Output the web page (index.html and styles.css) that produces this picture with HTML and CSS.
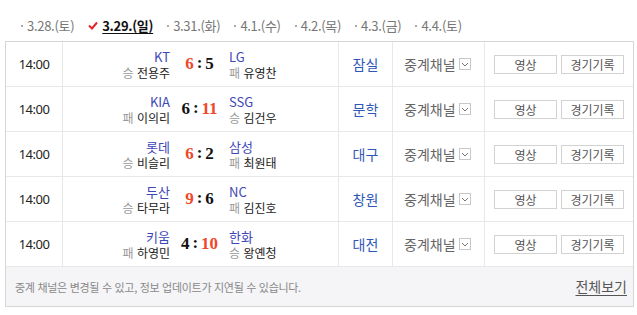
FILE: index.html
```html
<!DOCTYPE html>
<html lang="ko">
<head>
<meta charset="utf-8">
<link rel="stylesheet" href="styles.css">
</head>
<body>
<ul class="dates">
  <li class="date">3.28.(토)</li>
  <li class="date on"><svg class="check" width="10" height="9" viewBox="0 0 10 9"><path d="M1 4.5 L4 7.5 L9 1.5" fill="none" stroke="#e0252b" stroke-width="2"/></svg>3.29.(일)</li>
  <li class="date">3.31.(화)</li>
  <li class="date">4.1.(수)</li>
  <li class="date">4.2.(목)</li>
  <li class="date">4.3.(금)</li>
  <li class="date">4.4.(토)</li>
</ul>
<div class="board">
  <div class="row">
    <div class="cell time">14:00</div>
    <div class="cell match">
      <div class="team left"><span class="name">KT</span><span class="pitcher"><em>승</em> 전용주</span></div>
      <div class="score"><b class="win">6</b><i>:</i><b>5</b></div>
      <div class="team right"><span class="name">LG</span><span class="pitcher"><em>패</em> 유영찬</span></div>
    </div>
    <div class="cell stadium">잠실</div>
    <div class="cell channel">중계채널<span class="sel"><svg width="8" height="5" viewBox="0 0 8 5"><path d="M1 1 L4 4 L7 1" fill="none" stroke="#777" stroke-width="1"/></svg></span></div>
    <div class="cell btns"><span class="btn">영상</span><span class="btn">경기기록</span></div>
  </div>
  <div class="row">
    <div class="cell time">14:00</div>
    <div class="cell match">
      <div class="team left"><span class="name">KIA</span><span class="pitcher"><em>패</em> 이의리</span></div>
      <div class="score"><b>6</b><i>:</i><b class="win">11</b></div>
      <div class="team right"><span class="name">SSG</span><span class="pitcher"><em>승</em> 김건우</span></div>
    </div>
    <div class="cell stadium">문학</div>
    <div class="cell channel">중계채널<span class="sel"><svg width="8" height="5" viewBox="0 0 8 5"><path d="M1 1 L4 4 L7 1" fill="none" stroke="#777" stroke-width="1"/></svg></span></div>
    <div class="cell btns"><span class="btn">영상</span><span class="btn">경기기록</span></div>
  </div>
  <div class="row">
    <div class="cell time">14:00</div>
    <div class="cell match">
      <div class="team left"><span class="name">롯데</span><span class="pitcher"><em>승</em> 비슬리</span></div>
      <div class="score"><b class="win">6</b><i>:</i><b>2</b></div>
      <div class="team right"><span class="name">삼성</span><span class="pitcher"><em>패</em> 최원태</span></div>
    </div>
    <div class="cell stadium">대구</div>
    <div class="cell channel">중계채널<span class="sel"><svg width="8" height="5" viewBox="0 0 8 5"><path d="M1 1 L4 4 L7 1" fill="none" stroke="#777" stroke-width="1"/></svg></span></div>
    <div class="cell btns"><span class="btn">영상</span><span class="btn">경기기록</span></div>
  </div>
  <div class="row">
    <div class="cell time">14:00</div>
    <div class="cell match">
      <div class="team left"><span class="name">두산</span><span class="pitcher"><em>승</em> 타무라</span></div>
      <div class="score"><b class="win">9</b><i>:</i><b>6</b></div>
      <div class="team right"><span class="name">NC</span><span class="pitcher"><em>패</em> 김진호</span></div>
    </div>
    <div class="cell stadium">창원</div>
    <div class="cell channel">중계채널<span class="sel"><svg width="8" height="5" viewBox="0 0 8 5"><path d="M1 1 L4 4 L7 1" fill="none" stroke="#777" stroke-width="1"/></svg></span></div>
    <div class="cell btns"><span class="btn">영상</span><span class="btn">경기기록</span></div>
  </div>
  <div class="row">
    <div class="cell time">14:00</div>
    <div class="cell match">
      <div class="team left"><span class="name">키움</span><span class="pitcher"><em>패</em> 하영민</span></div>
      <div class="score"><b>4</b><i>:</i><b class="win">10</b></div>
      <div class="team right"><span class="name">한화</span><span class="pitcher"><em>승</em> 왕옌청</span></div>
    </div>
    <div class="cell stadium">대전</div>
    <div class="cell channel">중계채널<span class="sel"><svg width="8" height="5" viewBox="0 0 8 5"><path d="M1 1 L4 4 L7 1" fill="none" stroke="#777" stroke-width="1"/></svg></span></div>
    <div class="cell btns"><span class="btn">영상</span><span class="btn">경기기록</span></div>
  </div>
  <div class="foot">
    <p class="notice">중계 채널은 변경될 수 있고, 정보 업데이트가 지연될 수 있습니다.</p>
    <a class="more">전체보기</a>
  </div>
</div>
</body>
</html>
```
FILE: styles.css
```css
* { box-sizing: border-box; }
body {
  margin: 0;
  background: #fff;
  font-family: "Noto Sans CJK KR", "Noto Sans", sans-serif;
  color: #222;
}
.dates {
  list-style: none;
  margin: 0;
  padding: 10px 0 0 21px;
  height: 41px;
  display: flex;
  gap: 14px;
}
.date {
  font-size: 13px;
  line-height: 18px;
  color: #777;
  letter-spacing: -0.3px;
  display: flex;
  align-items: center;
}
.date::before {
  content: "";
  width: 2px;
  height: 2px;
  background: #aaa;
  margin-right: 4px;
}
.date.on {
  color: #111;
  font-weight: bold;
  text-decoration: underline;
  text-underline-offset: 2px;
}
.date.on::before { display: none; }
.check { margin-right: 4px; }

.board {
  margin-left: 5px;
  width: 629px;
  border: 1px solid #d6d6d6;
}
.row {
  display: grid;
  grid-template-columns: 56px 276px 54px 92px 149px;
  height: 45px;
  border-bottom: 1px solid #e8e8e8;
}
.cell {
  display: flex;
  align-items: center;
  border-left: 1px solid #e8e8e8;
}
.time {
  border-left: none;
  justify-content: center;
  font-size: 13px;
  color: #222;
  letter-spacing: -0.5px;
  font-family: "Noto Sans", sans-serif;
}
.match {
  display: grid;
  grid-template-columns: 107px 59px 1fr;
  align-items: center;
}
.team {
  display: flex;
  flex-direction: column;
}
.team.left { align-items: flex-end; }
.team.right { align-items: flex-start; }
.name {
  font-size: 13px;
  line-height: 16px;
  color: #3d47b5;
}
.pitcher {
  font-size: 12px;
  line-height: 15px;
  color: #222;
}
.pitcher em {
  font-style: normal;
  color: #999;
}
.score {
  display: flex;
  justify-content: center;
  align-items: center;
  font-family: "Liberation Serif", serif;
  font-weight: bold;
  font-size: 17px;
  color: #111;
  line-height: 20px;
}
.score i {
  font-style: normal;
  margin: 0 3px;
  position: relative;
  top: -1px;
}
.score b.win { color: #f0482a; }
.stadium {
  justify-content: center;
  font-size: 14px;
  color: #2f57b7;
}
.channel {
  padding-left: 11px;
  font-size: 14px;
  color: #666;
}
.sel {
  width: 12px;
  height: 12px;
  margin-left: 3px;
  border: 1px solid #c8c8c8;
  display: flex;
  align-items: center;
  justify-content: center;
}
.btns {
  padding-left: 9px;
  gap: 4px;
}
.btn {
  width: 63px;
  height: 19px;
  border: 1px solid #d2d2d2;
  font-size: 12px;
  color: #555;
  display: flex;
  align-items: center;
  justify-content: center;
}
.foot {
  background: #f5f5f7;
  height: 39px;
  display: flex;
  align-items: center;
  justify-content: space-between;
  padding: 0 6px 0 9px;
}
.notice {
  margin: 0;
  font-size: 11px;
  color: #888;
  letter-spacing: -0.3px;
}
.more {
  font-size: 14px;
  color: #555;
  text-decoration: underline;
  text-underline-offset: 3px;
  padding-bottom: 2px;
}
```
